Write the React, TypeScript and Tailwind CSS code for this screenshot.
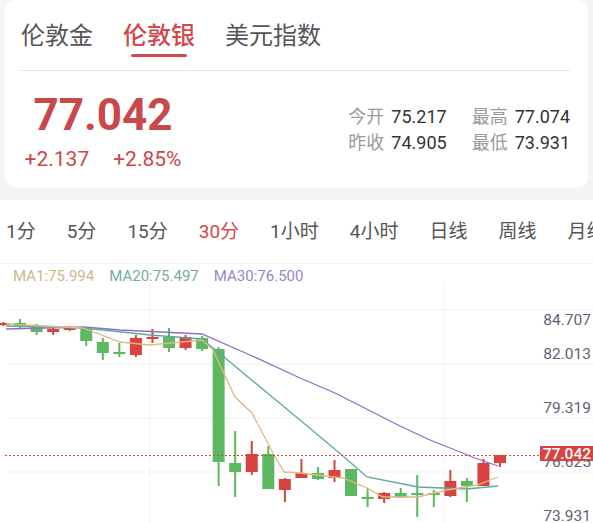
import React from "react";

type Candle = [number, number, number, number, "up" | "down"]; // bodyTop, bodyBottom, wickTop, wickBottom

const RED = "#d8423f";
const GREEN = "#5db862";

// pixel values read straight off the chart, index 0 = left-most candle
const candles: Candle[] = [
  [323, 325, 322, 326, "down"],
  [323, 327, 319, 329, "up"],
  [327, 332, 324, 335, "up"],
  [329, 332, 327, 335, "down"],
  [327, 330, 326, 331, "down"],
  [328, 341, 327, 346, "up"],
  [342, 353, 338, 360, "up"],
  [352, 354, 343, 357, "up"],
  [338, 355, 335, 357, "down"],
  [337, 339, 329, 343, "down"],
  [337, 348, 328, 352, "up"],
  [337, 348, 335, 350, "down"],
  [338, 349, 336, 351, "up"],
  [349, 462, 347, 486, "up"],
  [463, 472, 431, 497, "up"],
  [454, 472, 441, 475, "down"],
  [454, 489, 446, 489, "up"],
  [479, 490, 478, 502, "down"],
  [473, 478, 459, 478, "down"],
  [473, 479, 467, 480, "up"],
  [470, 478, 460, 482, "down"],
  [469, 496, 469, 496, "up"],
  [497, 499, 488, 507, "up"],
  [493, 499, 492, 503, "down"],
  [493, 497, 488, 498, "up"],
  [493, 495, 475, 517, "up"],
  [493, 495, 490, 507, "up"],
  [481, 496, 470, 497, "down"],
  [481, 486, 478, 502, "up"],
  [463, 486, 459, 486, "down"],
  [455, 463, 455, 467, "down"],
];

const ma30 = "6,329 84,327 120,330 202,334 250,355 300,378 335,393 400,426 430,440 475,458 498,466";
const ma20 = "6,326 84,328 150,335 202,339 230,362 300,420 343,456 367,477 418,487 467,489 498,486";
const ma1 =
  "6,324 83,328 120,342 150,345 202,340 213,350 235,397 252,413 273,453 284,472 300,473 343,478 367,488 383,497 418,497 447,490 477,485 498,477";

const topTabs = ["伦敦金", "伦敦银", "美元指数"];
const periods = ["1分", "5分", "15分", "30分", "1小时", "4小时", "日线", "周线", "月线"];

const stats = [
  { label: "今开", value: "75.217" },
  { label: "最高", value: "77.074" },
  { label: "昨收", value: "74.905" },
  { label: "最低", value: "73.931" },
];

const KChart = () => {
  const axis = [
    { v: "84.707", y: 320 },
    { v: "82.013", y: 354 },
    { v: "79.319", y: 408 },
    { v: "76.625", y: 462 },
    { v: "73.931", y: 516 },
  ];
  return (
    <svg width={593} height={239} viewBox="0 284 593 239" className="block">
      {[310, 364, 418, 472].map((y) => (
        <line key={y} x1={8} x2={593} y1={y} y2={y} stroke="#f1f1f1" strokeWidth={1} />
      ))}
      {[150, 444].map((x) => (
        <line key={x} x1={x} x2={x} y1={284} y2={523} stroke="#f1f1f1" strokeWidth={1} />
      ))}

      {candles.map(([bt, bb, wt, wb, dir], i) => {
        const cx = 3.5 + i * 16.55;
        const c = dir === "up" ? GREEN : RED;
        return (
          <g key={i}>
            <rect x={cx - 1} y={wt} width={2} height={wb - wt} fill={c} />
            <rect x={cx - 6} y={bt} width={12} height={Math.max(bb - bt, 1.5)} fill={c} />
          </g>
        );
      })}

      <polyline points={ma30} fill="none" stroke="#8d6fc9" strokeWidth={1.3} />
      <polyline points={ma20} fill="none" stroke="#5ea99b" strokeWidth={1.3} />
      <polyline points={ma1} fill="none" stroke="#dcbb84" strokeWidth={1.3} />

      <line x1={5} x2={541} y1={455.5} y2={455.5} stroke={RED} strokeWidth={1.2} strokeDasharray="2 2" />

      {axis.map((a) => (
        <text
          key={a.v}
          x={591}
          y={a.y}
          textAnchor="end"
          dominantBaseline="central"
          fontSize={15.5}
          fill="#5b6473"
        >
          {a.v}
        </text>
      ))}
      <rect x={540} y={446} width={53} height={15} fill={RED} />
      <text
        x={591}
        y={453.5}
        textAnchor="end"
        dominantBaseline="central"
        fontSize={15.5}
        fontWeight={500}
        fill="#fff"
      >
        77.042
      </text>
    </svg>
  );
};

export default function App() {
  return (
    <div className="w-[593px] h-[523px] overflow-hidden bg-[#f4f4f4] font-[Roboto,'Noto_Sans_CJK_SC',sans-serif]">
      <div className="mx-[5px] h-[188px] bg-white rounded-[10px] rounded-b-[12px] pl-[15px] pr-[18px]">
        <div className="flex gap-[30px] pl-[1px] h-[71px] border-b border-[#e9e9e9]">
          {topTabs.map((t, i) => (
            <div key={t} className="flex flex-col items-center pt-[20px]">
              <span
                className={`text-[24px] leading-[32px] ${
                  i === 1 ? "text-[#d0484b] font-medium" : "text-[#555]"
                }`}
              >
                {t}
              </span>
              {i === 1 && <div className="mt-[2px] h-[3px] w-[56px] rounded-full bg-[#d0484b]" />}
            </div>
          ))}
        </div>

        <div className="flex justify-between h-[116px]">
          <div className="flex flex-col items-center pt-[20px] w-[166px]">
            <span className="text-[44px] leading-[48px] font-bold text-[#c9484a]">77.042</span>
            <div className="flex gap-[24px] mt-[8px] text-[21px] leading-[24px] text-[#c9484a]">
              <span>+2.137</span>
              <span>+2.85%</span>
            </div>
          </div>

          <div className="pt-[33px]">
            <div className="grid grid-cols-[auto_auto] gap-x-[25px] text-[18px] leading-[26px]">
              {stats.map((s) => (
                <div key={s.label} className="flex gap-[7px]">
                  <span className="text-[#9a9a9a]">{s.label}</span>
                  <span className="text-[#333]">{s.value}</span>
                </div>
              ))}
            </div>
          </div>
        </div>
      </div>

      <div className="mt-[12px] h-[323px] bg-white">
        <div className="flex items-center gap-[31px] pl-[6px] h-[64px] border-b border-[#f3f3f3] whitespace-nowrap overflow-hidden">
          {periods.map((p) => (
            <span
              key={p}
              className={`text-[19px] leading-[26px] ${p === "30分" ? "text-[#d8474a]" : "text-[#555]"}`}
            >
              {p}
            </span>
          ))}
        </div>
        <div className="flex gap-[15px] pl-[13px] pt-[2px] h-[20px] text-[15px] leading-[20px]">
          <span className="text-[#cbb78c]">MA1:75.994</span>
          <span className="text-[#72ada1]">MA20:75.497</span>
          <span className="text-[#9b84cb]">MA30:76.500</span>
        </div>
        <KChart />
      </div>
    </div>
  );
}
